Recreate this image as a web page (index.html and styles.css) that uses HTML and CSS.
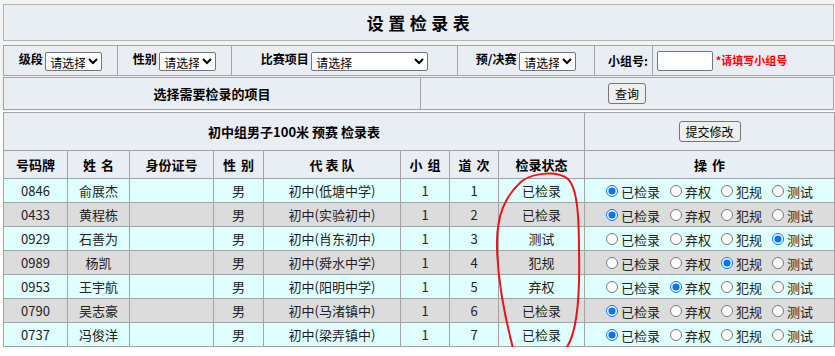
FILE: index.html
```html
<!DOCTYPE html>
<html>
	<head>
		<meta charset="utf-8" />
		<title>设置检录表</title>
		<link rel="stylesheet" href="styles.css">
	</head>
	<body>
		<div class="head">
			<div class="title">设置检录表</div>

			<!-- 筛选条件 -->
			<table class="filter">
				<colgroup>
					<col class="f1"><col class="f2"><col class="f3"><col class="f4"><col class="f5"><col class="f6">
				</colgroup>
				<tr>
					<td><b>级段</b> <select class="sel"><option>请选择</option></select></td>
					<td><b>性别</b> <select class="sel"><option>请选择</option></select></td>
					<td><b>比赛项目</b> <select class="sel sel_wide"><option>请选择</option></select></td>
					<td><b>预/决赛</b> <select class="sel"><option>请选择</option></select></td>
					<td class="al_r"><b>小组号:</b></td>
					<td class="al_l"><input type="text" class="grp"> <span class="tip">*请填写小组号</span></td>
				</tr>
			</table>

			<table class="query">
				<tr>
					<td class="half"><b>选择需要检录的项目</b></td>
					<td><button class="btn">查询</button></td>
				</tr>
			</table>
		</div>

		<!-- 检录表 -->
		<table class="list">
			<colgroup>
				<col class="c1"><col class="c2"><col class="c3"><col class="c4"><col class="c5">
				<col class="c6"><col class="c7"><col class="c8"><col class="c9">
			</colgroup>
			<tr class="cap">
				<td colspan="8"><b>初中组男子100米 预赛 检录表</b></td>
				<td><button class="btn">提交修改</button></td>
			</tr>
			<tr class="th_row">
				<th>号码牌</th>
				<th>姓 名</th>
				<th>身份证号</th>
				<th>性 别</th>
				<th class="wide_sp">代表队</th>
				<th>小 组</th>
				<th>道 次</th>
				<th>检录状态</th>
				<th>操 作</th>
			</tr>
			<tr class="row_a">
				<td>0846</td><td>俞展杰</td><td></td><td>男</td><td>初中(低塘中学)</td><td>1</td><td>1</td><td>已检录</td>
				<td class="ops">
					<label><input type="radio" name="r1" checked>已检录</label><label><input type="radio" name="r1">弃权</label><label><input type="radio" name="r1">犯规</label><label><input type="radio" name="r1">测试</label>
				</td>
			</tr>
			<tr class="row_b">
				<td>0433</td><td>黄程栋</td><td></td><td>男</td><td>初中(实验初中)</td><td>1</td><td>2</td><td>已检录</td>
				<td class="ops">
					<label><input type="radio" name="r2" checked>已检录</label><label><input type="radio" name="r2">弃权</label><label><input type="radio" name="r2">犯规</label><label><input type="radio" name="r2">测试</label>
				</td>
			</tr>
			<tr class="row_a">
				<td>0929</td><td>石善为</td><td></td><td>男</td><td>初中(肖东初中)</td><td>1</td><td>3</td><td>测试</td>
				<td class="ops">
					<label><input type="radio" name="r3">已检录</label><label><input type="radio" name="r3">弃权</label><label><input type="radio" name="r3">犯规</label><label><input type="radio" name="r3" checked>测试</label>
				</td>
			</tr>
			<tr class="row_b">
				<td>0989</td><td>杨凯</td><td></td><td>男</td><td>初中(舜水中学)</td><td>1</td><td>4</td><td>犯规</td>
				<td class="ops">
					<label><input type="radio" name="r4">已检录</label><label><input type="radio" name="r4">弃权</label><label><input type="radio" name="r4" checked>犯规</label><label><input type="radio" name="r4">测试</label>
				</td>
			</tr>
			<tr class="row_a">
				<td>0953</td><td>王宇航</td><td></td><td>男</td><td>初中(阳明中学)</td><td>1</td><td>5</td><td>弃权</td>
				<td class="ops">
					<label><input type="radio" name="r5">已检录</label><label><input type="radio" name="r5" checked>弃权</label><label><input type="radio" name="r5">犯规</label><label><input type="radio" name="r5">测试</label>
				</td>
			</tr>
			<tr class="row_b">
				<td>0790</td><td>吴志豪</td><td></td><td>男</td><td>初中(马渚镇中)</td><td>1</td><td>6</td><td>已检录</td>
				<td class="ops">
					<label><input type="radio" name="r6" checked>已检录</label><label><input type="radio" name="r6">弃权</label><label><input type="radio" name="r6">犯规</label><label><input type="radio" name="r6">测试</label>
				</td>
			</tr>
			<tr class="row_a">
				<td>0737</td><td>冯俊洋</td><td></td><td>男</td><td>初中(梁弄镇中)</td><td>1</td><td>7</td><td>已检录</td>
				<td class="ops">
					<label><input type="radio" name="r7" checked>已检录</label><label><input type="radio" name="r7">弃权</label><label><input type="radio" name="r7">犯规</label><label><input type="radio" name="r7">测试</label>
				</td>
			</tr>
		</table>

		<!-- 红笔圈注 -->
		<svg class="mark" width="835" height="356" viewBox="0 0 835 356">
			<path d="M514 352 C506 322, 498 284, 497 248 C496 216, 505 196, 522 181 C535 172, 558 171, 568 179 C578 189, 579 220, 579 252 C580 294, 578 330, 567 347 C557 358, 535 358, 521 353" fill="none" stroke="#e8141b" stroke-width="2" stroke-linecap="round"/>
		</svg>
	</body>
</html>
```

FILE: styles.css
```css
body {
	margin: 0;
	font-family: "Noto Sans CJK SC", "Noto Sans", sans-serif;
	font-size: 13px;
	line-height: 17px;
	color: #000;
	background: #fff;
	position: relative;
}
.head {
	background: #f3f3f3;
	padding: 4px 0 1px 3px;
}
.title {
	width: 825px;
	height: 35px;
	line-height: 35px;
	border: 1px solid #b4b4b4;
	background: #e9eef4;
	text-align: center;
	font-size: 17px;
	font-weight: bold;
	letter-spacing: 4.5px;
	padding-left: 4px;
	box-sizing: content-box;
	margin-bottom: 4px;
}
table {
	border-collapse: collapse;
	table-layout: fixed;
	width: 831px;
}
td, th {
	border: 1px solid #a3a3a3;
	padding: 0;
	text-align: center;
}

/** 筛选条件 **/
.filter td {
	height: 29px;
	background: #e9eef4;
	font-size: 12px;
}
.f1, .f2 { width: 114px; }
.f3 { width: 226px; }
.f4 { width: 137px; }
.f5 { width: 58px; }
.f6 { width: 182px; }
.al_r {
	text-align: right !important;
	padding-right: 4px !important;
}
.al_l {
	text-align: left !important;
	padding-left: 4px !important;
}
.sel {
	width: 57px;
	height: 19px;
	font-family: inherit;
	font-size: 12px;
	padding: 0;
	vertical-align: middle;
	border: 1px solid #767676;
	border-radius: 2px;
	background: #fff;
}
.sel_wide {
	width: 117px;
}
.grp {
	width: 52px;
	height: 16px;
	padding: 1px;
	border: 1px solid #767676;
	border-radius: 2px;
	vertical-align: middle;
}
.tip {
	color: #f00;
	font-size: 11px;
	font-weight: bold;
	vertical-align: middle;
}

.query {
	margin-top: 1px;
}
.query td {
	height: 31px;
	background: #e9eef4;
}
.query .half {
	width: 416px;
}

.btn {
	font-family: inherit;
	font-size: 12px;
	line-height: 17px;
	padding: 1px 6px;
	border: 1px solid #767676;
	border-radius: 3px;
	background: #efefef;
	color: #000;
	vertical-align: middle;
}

/** 检录表 **/
.list {
	margin: 1px 0 0 3px;
}
.c1 { width: 64px; }
.c2 { width: 62px; }
.c3 { width: 84px; }
.c4 { width: 50px; }
.c5 { width: 137px; }
.c6, .c7 { width: 49px; }
.c8 { width: 86px; }
.c9 { width: 250px; }
.cap td {
	height: 37px;
	background: #e9eef4;
}
.th_row th {
	height: 27px;
	background: #e9eef4;
	font-size: 13px;
	word-spacing: 2px;
}
.wide_sp {
	letter-spacing: 3px;
	text-indent: 3px;
}
.row_a td, .row_b td {
	height: 23px;
	color: #222;
}
.row_a td {
	background: #e0ffff;
}
.row_b td {
	background: #dcdcdc;
}
.ops label {
	display: inline-flex;
	align-items: center;
	margin-left: 10px;
	vertical-align: middle;
}
.ops label:first-child {
	margin-left: 0;
}
.ops input {
	width: 12px;
	height: 12px;
	margin: 0 3px 0 0;
}

.mark {
	position: absolute;
	left: 0;
	top: 0;
	pointer-events: none;
}
```
